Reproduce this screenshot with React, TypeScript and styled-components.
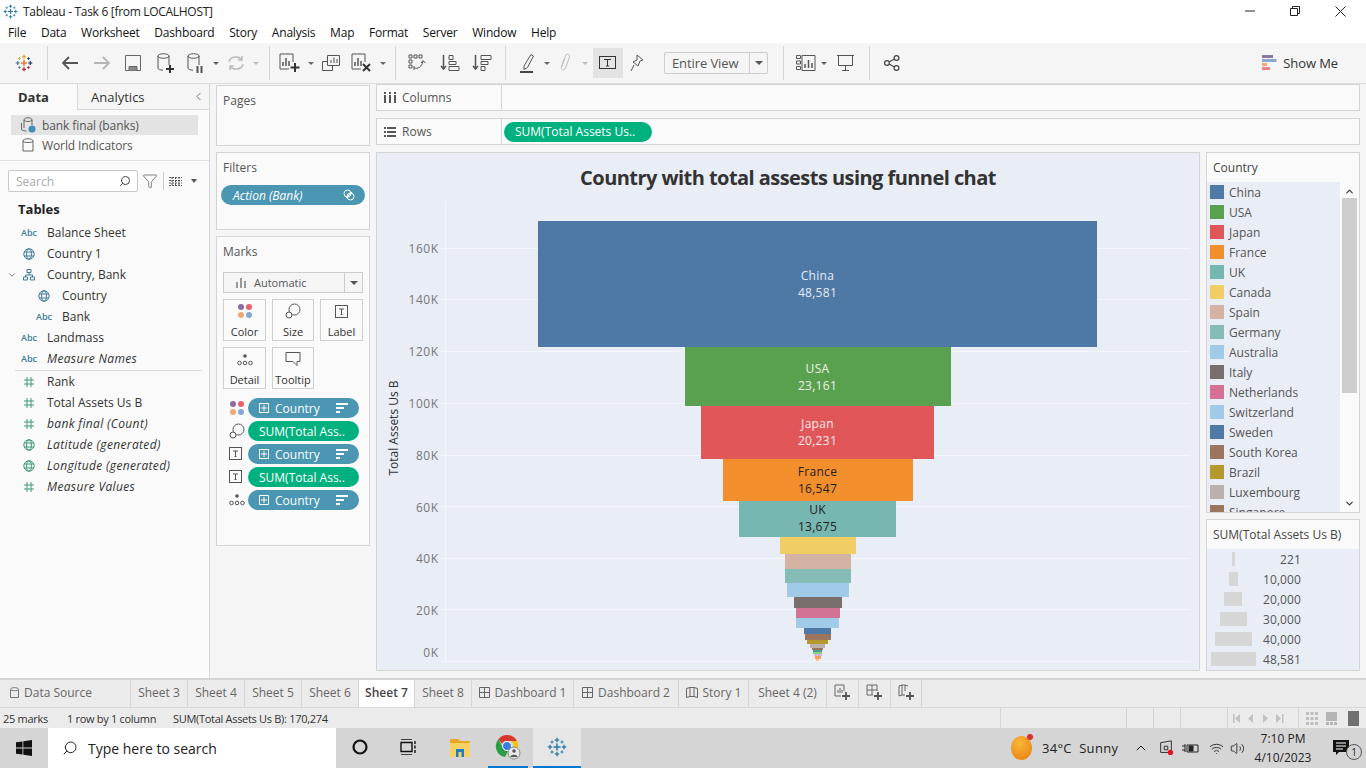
import React from 'react';
import styled, { createGlobalStyle } from 'styled-components';
import { Search, Filter, ChevronLeft, ChevronDown, ChevronUp, Wifi, Volume2 } from 'lucide-react';

const UI_FONT = '"Open Sans", "Noto Sans", "Liberation Sans", sans-serif';

const GlobalStyle = createGlobalStyle`
  html, body { margin: 0; padding: 0; background: #f5f5f5; }
  * { box-sizing: border-box; }
  body { font-family: ${UI_FONT}; font-size: 12px; color: #333; }
`;

const fields = {
  dims: [
    { kind: 'abc', name: 'Balance Sheet' },
    { kind: 'globe', name: 'Country 1' },
    { kind: 'tree', name: 'Country, Bank', caret: true },
    { kind: 'globe', name: 'Country', nested: true },
    { kind: 'abc', name: 'Bank', nested: true },
    { kind: 'abc', name: 'Landmass' },
    { kind: 'abc', name: 'Measure Names', calc: true },
  ],
  measures: [
    { kind: 'hash', name: 'Rank' },
    { kind: 'hash', name: 'Total Assets Us B' },
    { kind: 'hash', name: 'bank final (Count)', calc: true },
    { kind: 'geo', name: 'Latitude (generated)', calc: true },
    { kind: 'geo', name: 'Longitude (generated)', calc: true },
    { kind: 'hash', name: 'Measure Values', calc: true },
  ],
};

const countries = [
  ['China', '#4e79a7'], ['USA', '#59a14f'], ['Japan', '#e15759'], ['France', '#f28e2b'],
  ['UK', '#76b7b2'], ['Canada', '#f1ce63'], ['Spain', '#d4b3a5'], ['Germany', '#86bcb6'],
  ['Australia', '#a0cbe8'], ['Italy', '#79706e'], ['Netherlands', '#d37295'], ['Switzerland', '#a0cbe8'],
  ['Sweden', '#4e79a7'], ['South Korea', '#9c755f'], ['Brazil', '#b6992d'], ['Luxembourg', '#bab0ac'],
  ['Singapore', '#9c755f'],
];

const sizes = [['221', 3], ['10,000', 9], ['20,000', 18], ['30,000', 27], ['40,000', 37], ['48,581', 45]] as const;

// bar coordinates are page pixels, the svg viewBox starts where the card starts
const bars = [
  { x: 538, w: 559, y: 221, h: 126, c: '#4e79a7', label: ['China', '48,581'], ty: 280, t: '#e6ebf4' },
  { x: 685, w: 266, y: 347, h: 59, c: '#59a14f', label: ['USA', '23,161'], ty: 373, t: '#eef4ec' },
  { x: 701, w: 233, y: 406, h: 53, c: '#e15759', label: ['Japan', '20,231'], ty: 428, t: '#fbeaea' },
  { x: 723, w: 190, y: 459, h: 42, c: '#f28e2b', label: ['France', '16,547'], ty: 476, t: '#222' },
  { x: 739, w: 157, y: 501, h: 36, c: '#76b7b2', label: ['UK', '13,675'], ty: 514, t: '#222' },
  { x: 780, w: 76, y: 537, h: 17, c: '#f1ce63' },
  { x: 785, w: 66, y: 554, h: 15, c: '#d4b3a5' },
  { x: 785, w: 66, y: 569, h: 14, c: '#86bcb6' },
  { x: 787, w: 62, y: 583, h: 14, c: '#a0cbe8' },
  { x: 794, w: 48, y: 597, h: 11, c: '#79706e' },
  { x: 796, w: 44, y: 608, h: 10, c: '#d37295' },
  { x: 796, w: 43, y: 618, h: 10, c: '#a0cbe8' },
  { x: 804, w: 27, y: 628, h: 6, c: '#4e79a7' },
  { x: 805, w: 26, y: 634, h: 6, c: '#9c755f' },
  { x: 807, w: 21, y: 640, h: 4, c: '#b6992d' },
  { x: 810, w: 15, y: 644, h: 4, c: '#bab0ac' },
  { x: 812, w: 11, y: 648, h: 2, c: '#9c755f' },
  { x: 813, w: 9, y: 650, h: 2, c: '#499894' },
  { x: 813, w: 9, y: 652, h: 2, c: '#8cd17d' },
  { x: 814, w: 8, y: 654, h: 2, c: '#d7b5d8' },
  { x: 815, w: 6, y: 656, h: 3, c: '#ff9d5c' },
  { x: 816, w: 3, y: 659, h: 2, c: '#ffbe7d' },
];

const ticks = [
  ['160K', 248, 248], ['140K', 299, 299], ['120K', 351, 351], ['100K', 403, 403],
  ['80K', 455, 455], ['60K', 507, 506], ['40K', 558, 558], ['20K', 610, 609], ['0K', 652, 661],
] as const;

function TableauMark({ size = 18, colors }: { size?: number; colors: string[] }) {
  const plus = (cx: number, cy: number, r: number, c: string, w = 1.4) => (
    <g key={`${cx}-${cy}`} stroke={c} strokeWidth={w}>
      <line x1={cx - r} y1={cy} x2={cx + r} y2={cy} />
      <line x1={cx} y1={cy - r} x2={cx} y2={cy + r} />
    </g>
  );
  return (
    <svg width={size} height={size} viewBox="0 0 20 20">
      {plus(10, 10, 3.5, colors[0], 1.6)}
      {plus(10, 3, 2.2, colors[1])}
      {plus(10, 17, 2.2, colors[2])}
      {plus(3, 10, 2.2, colors[3])}
      {plus(17, 10, 2.2, colors[4])}
      {plus(5, 5, 1.6, colors[1], 1)}
      {plus(15, 5, 1.6, colors[4], 1)}
      {plus(5, 15, 1.6, colors[3], 1)}
      {plus(15, 15, 1.6, colors[2], 1)}
    </svg>
  );
}

const BLUE_MARK = ['#2f7fa8', '#2f7fa8', '#2f7fa8', '#2f7fa8', '#2f7fa8'];
const COLOR_MARK = ['#e8762d', '#e8a33d', '#c72035', '#5b879b', '#1f447b'];

function Db({ badge }: { badge?: 'plus' | 'pause' }) {
  return (
    <svg width="20" height="24" viewBox="0 0 20 24" fill="none">
      <path d="M2 5c0-3 11-3 11 0v9M2 5c0 3 11 3 11 0M2 5v12c0 1.500 2 2 5 2.200" stroke="#555" />
      {badge === 'plus' && <path d="M14 14v8M10 18h8" stroke="#333" strokeWidth="2" />}
      {badge === 'pause' && <path d="M11.500 15v7M15.500 15v7" stroke="#555" strokeWidth="2" />}
    </svg>
  );
}

function SheetIcon({ badge }: { badge: 'plus' | 'x' }) {
  return (
    <svg width="24" height="24" viewBox="0 0 24 24" fill="none">
      <path d="M15 3H2v15h9M15 3v8" stroke="#555" />
      <path d="M5 15v-4M8 15V7M11 15v-5" stroke="#555" strokeWidth="1.500" />
      {badge === 'plus' ? <path d="M17 12v9M12.500 16.500h9" stroke="#333" strokeWidth="2" /> : <path d="M13 13l7 7M20 13l-7 7" stroke="#333" strokeWidth="2" />}
    </svg>
  );
}

function FieldIcon({ kind }: { kind: string }) {
  if (kind === 'abc') return <AbcMark>Abc</AbcMark>;
  if (kind === 'hash') {
    return (
      <svg width="12" height="12" viewBox="0 0 12 12" stroke="#3f9a78" fill="none">
        <path d="M4 1v10M8 1v10M1 4h10M1 8h10" />
      </svg>
    );
  }
  if (kind === 'tree') {
    return (
      <svg width="12" height="12" viewBox="0 0 12 12" stroke="#3c7b9c" fill="none">
        <path d="M4 .5h4v3H4zM.5 8h4v3h-4zM7.500 8h4v3h-4zM6 3.500V6M2.500 8V6h7v2" />
      </svg>
    );
  }
  const c = kind === 'geo' ? '#3f9a78' : '#3c7b9c';
  return (
    <svg width="12" height="12" viewBox="0 0 12 12" stroke={c} fill="none">
      <circle cx="6" cy="6" r="5.200" />
      <ellipse cx="6" cy="6" rx="2.400" ry="5.200" />
      <path d="M1 4h10M1 8h10" />
    </svg>
  );
}

const ColorDots = () => (
  <svg width="16" height="16" viewBox="0 0 16 16">
    <circle cx="4" cy="4" r="3" fill="#8a6d9c" />
    <circle cx="12" cy="4" r="3" fill="#e5636b" />
    <circle cx="4" cy="12" r="3" fill="#f0a878" />
    <circle cx="12" cy="12" r="3" fill="#86a6d0" />
  </svg>
);
const SizeRings = () => (
  <svg width="16" height="16" viewBox="0 0 16 16" fill="none" stroke="#555">
    <circle cx="9.500" cy="6.500" r="5.500" />
    <circle cx="4" cy="12" r="3" fill="#fafafa" />
  </svg>
);
const LabelBox = () => (
  <svg width="14" height="14" viewBox="0 0 14 14" fill="none" stroke="#555">
    <rect x=".5" y=".5" width="12" height="12" />
    <path d="M4 4h5M6.500 4v5.500M5.500 9.500h2" />
  </svg>
);
const DetailDots = () => (
  <svg width="16" height="14" viewBox="0 0 16 14" fill="none" stroke="#555">
    <circle cx="8" cy="3" r="1.800" fill="#555" stroke="none" />
    <circle cx="2.500" cy="10" r="1.800" />
    <circle cx="8" cy="10" r="1.800" />
    <circle cx="13.500" cy="10" r="1.800" />
  </svg>
);
const TooltipBubble = () => (
  <svg width="16" height="16" viewBox="0 0 16 16" fill="none" stroke="#555">
    <path d="M1 1.500h14v9h-3v4l-4-4H1z" />
  </svg>
);
const PlusBox = () => (
  <svg width="10" height="10" viewBox="0 0 10 10" fill="none" stroke="#fff">
    <path d="M.5.5h9v9h-9zM5 2v6M2 5h6" />
  </svg>
);
const SortLines = () => (
  <svg width="12" height="10" viewBox="0 0 12 10" fill="#fff">
    <path d="M0 0h12v2H0zM0 4h8v2H0zM0 8h4v2H0z" />
  </svg>
);

export default function App() {
  return (
    <Screen>
      <GlobalStyle />
      <TitleBar>
        <TableauMark size={15} colors={BLUE_MARK} />
        <TitleText>Tableau - Task 6 [from LOCALHOST]</TitleText>
        <WindowButtons>
          <svg width="10" height="10" viewBox="0 0 10 10" stroke="#222"><path d="M0 5h10" /></svg>
          <svg width="10" height="10" viewBox="0 0 10 10" stroke="#222" fill="none"><path d="M.5 2.500h7v7h-7zM2.500 2.500v-2h7v7h-2" /></svg>
          <svg width="11" height="11" viewBox="0 0 11 11" stroke="#222"><path d="M.5.5l10 10M10.500.5l-10 10" /></svg>
        </WindowButtons>
      </TitleBar>
      <MenuBar>
        {['File', 'Data', 'Worksheet', 'Dashboard', 'Story', 'Analysis', 'Map', 'Format', 'Server', 'Window', 'Help'].map(m => (
          <MenuItem key={m}>{m}</MenuItem>
        ))}
      </MenuBar>
      <Toolbar>
        <ToolButton $w={32}><TableauMark size={18} colors={COLOR_MARK} /></ToolButton>
        <ToolSep $l={7} $r={7} />
        <ToolButton $w={30}>
          <svg width="18" height="16" viewBox="0 0 18 16" fill="none" stroke="#555" strokeWidth="1.800"><path d="M17 8H2M8 2L2 8l6 6" /></svg>
        </ToolButton>
        <ToolButton $w={34}>
          <svg width="18" height="16" viewBox="0 0 18 16" fill="none" stroke="#b5b5b5" strokeWidth="1.800"><path d="M1 8h15M10 2l6 6-6 6" /></svg>
        </ToolButton>
        <ToolButton $w={28}>
          <svg width="16" height="16" viewBox="0 0 16 16" fill="none" stroke="#666"><path d="M.5.5h15v15H.5z" /><path d="M4 15.500v-4h8v4" fill="#888" /></svg>
        </ToolButton>
        <ToolButton $w={38}><Db badge="plus" /></ToolButton>
        <ToolButton $w={22}><Db badge="pause" /></ToolButton>
        <ToolCaret $w={18} />
        <ToolButton $w={22}>
          <svg width="18" height="16" viewBox="0 0 18 16" fill="none" stroke="#bbb" strokeWidth="1.500"><path d="M2 7a7 6 0 0 1 13-2M16 9a7 6 0 0 1-13 2M15 1v4h-4M3 15v-4h4" /></svg>
        </ToolButton>
        <ToolCaret $w={18} $muted />
        <ToolSep $l={4} $r={4} />
        <ToolButton $w={32}><SheetIcon badge="plus" /></ToolButton>
        <ToolCaret $w={10} />
        <ToolButton $w={30}>
          <svg width="18" height="18" viewBox="0 0 18 18" fill="none" stroke="#555"><path d="M5.500 1.500h12v10h-12zM.5 7.500h5M.5 7.500v9h10v-5" /><path d="M9 9V6M12 9V3.500M15 9V5" /></svg>
        </ToolButton>
        <ToolButton $w={32}><SheetIcon badge="x" /></ToolButton>
        <ToolCaret $w={10} />
        <ToolSep $l={7} $r={4} />
        <ToolButton $w={34}>
          <svg width="18" height="18" viewBox="0 0 18 18" fill="none" stroke="#555"><path d="M1 1h3v3H1zM6 1h3v3H6zM11 1h3v3h-3zM1 6h3v3H1zM1 11h3v3H1zM6 14c4 1 8-1 9-7M13 9l2-2.500L17.500 9M6 12v4" /></svg>
        </ToolButton>
        <ToolButton $w={32}>
          <svg width="20" height="18" viewBox="0 0 20 18" fill="none" stroke="#555"><path d="M3.500 1v14M1 12l2.500 3L6 12" strokeWidth="1.500" /><path d="M9 1.500h4v4H9zM9 7.500h7v3H9zM9 12.500h10v4H9z" /></svg>
        </ToolButton>
        <ToolButton $w={32}>
          <svg width="20" height="18" viewBox="0 0 20 18" fill="none" stroke="#555"><path d="M3.500 1v14M1 12l2.500 3L6 12" strokeWidth="1.500" /><path d="M9 1.500h10v4H9zM9 7.500h7v3H9zM9 12.500h4v4H9z" /></svg>
        </ToolButton>
        <ToolSep $l={7} $r={8} />
        <ToolButton $w={28}>
          <svg width="16" height="20" viewBox="0 0 16 20" fill="none" stroke="#555"><path d="M4 13L11 1.500l2.500 1.500-6 11.500-3.500 2z" /><path d="M0 19h13" stroke="#444" strokeWidth="2" /></svg>
        </ToolButton>
        <ToolCaret $w={10} />
        <ToolButton $w={28}>
          <svg width="14" height="20" viewBox="0 0 14 20" fill="none" stroke="#bbb"><path d="M5 6l-2.500 8c-.8 3 3 4 4 1l4-11c.8-3-3-4-4-1L3 13" /></svg>
        </ToolButton>
        <ToolCaret $w={10} $muted />
        <ActiveTool>
          <svg width="18" height="18" viewBox="0 0 18 18" fill="none" stroke="#333"><rect x=".5" y="2.500" width="16" height="12" /><path d="M5 5.500h7M8.500 5.500v6.500M7 12h3" /></svg>
        </ActiveTool>
        <ToolButton $w={28}>
          <svg width="14" height="18" viewBox="0 0 14 18" fill="none" stroke="#555"><path d="M7 1l6 5-3 1-2 5-5-4 4-2zM4 11l-3 6" /></svg>
        </ToolButton>
        <FitSelect>
          <FitLabel>Entire View</FitLabel>
          <FitCaret />
        </FitSelect>
        <ToolSep $l={15} $r={8} />
        <ToolButton $w={28}>
          <svg width="20" height="16" viewBox="0 0 20 16" fill="none" stroke="#555"><path d="M.5.5h4v3h-4zM.5 6h4v3h-4zM.5 11.500h4v3h-4zM6 .5h13v15H6z" /><path d="M9 13V9M12.500 13V5M16 13V8" strokeWidth="1.500" /></svg>
        </ToolButton>
        <ToolCaret $w={8} />
        <ToolButton $w={36}>
          <svg width="18" height="18" viewBox="0 0 18 18" fill="none" stroke="#555"><path d="M0 1.500h17M1.500 1.500v10h14v-10M8.500 11.500v5M5 16.500h7" /></svg>
        </ToolButton>
        <ToolSep $l={5} $r={6} />
        <ToolButton $w={32}>
          <svg width="16" height="16" viewBox="0 0 16 16" fill="none" stroke="#444" strokeWidth="1.200"><circle cx="3" cy="8" r="2.400" /><circle cx="12.500" cy="3" r="2.400" /><circle cx="12.500" cy="13" r="2.400" /><path d="M5 7l5.500-3M5 9l5.500 3" /></svg>
        </ToolButton>
        <ShowMe>
          <svg width="15" height="16" viewBox="0 0 15 16">
            <path d="M0 0h11v3H0z" fill="#8a7aa0" />
            <path d="M0 4h14.500v3H0z" fill="#8aa8d0" />
            <path d="M0 8h5v3H0z" fill="#f0a878" />
            <path d="M0 12h8v3H0z" fill="#f08088" />
          </svg>
          Show Me
        </ShowMe>
      </Toolbar>
      <Workspace>
        <DataPane>
          <PaneTabs>
            <PaneTab $active>Data</PaneTab>
            <PaneTab>Analytics</PaneTab>
            <PaneTabFill><ChevronLeft size={13} strokeWidth={1.500} color="#555" /></PaneTabFill>
          </PaneTabs>
          <SourceList>
            <SourceRow $active>
              <svg width="16" height="16" viewBox="0 0 16 16" fill="none" stroke="#666"><path d="M4 3c0-3 8-3 8 0v5M4 3c0 2 8 2 8 0M4 3v8M1.500 6v6c0 1.500 3 2 5 2" /><circle cx="12" cy="12" r="3.500" fill="#3f8fb5" stroke="none" /></svg>
              bank final (banks)
            </SourceRow>
            <SourceRow>
              <svg width="12" height="15" viewBox="0 0 12 15" fill="none" stroke="#666"><path d="M1 3c0-3 10-3 10 0v10H1zM1 3c0 2 10 2 10 0" /></svg>
              World Indicators
            </SourceRow>
          </SourceList>
          <SearchRow>
            <SearchBox>
              <span>Search</span>
              <Search size={12} color="#444" style={{ transform: 'scaleX(-1)' }} />
            </SearchBox>
            <Filter size={16} strokeWidth={1.100} color="#555" />
            <SearchDivider />
            <svg width="13" height="9" viewBox="0 0 13 9" stroke="#555"><path d="M0 .5h13M0 3.500h13M0 6h13M0 8.500h13M3 0v9M6.500 0v9M10 0v9" strokeDasharray="2 1" /></svg>
            <SmallCaret />
          </SearchRow>
          <TablesTitle>Tables</TablesTitle>
          <FieldList>
            {fields.dims.map(f => (
              <FieldRow key={f.name} $nested={f.nested}>
                {f.caret && <TreeCaret><ChevronDown size={10} color="#666" /></TreeCaret>}
                <FieldIconSlot><FieldIcon kind={f.kind} /></FieldIconSlot>
                <FieldName $calc={f.calc}>{f.name}</FieldName>
              </FieldRow>
            ))}
            <FieldDivider />
            {fields.measures.map(f => (
              <FieldRow key={f.name}>
                <FieldIconSlot><FieldIcon kind={f.kind} /></FieldIconSlot>
                <FieldName $calc={f.calc}>{f.name}</FieldName>
              </FieldRow>
            ))}
          </FieldList>
        </DataPane>

        <CardsColumn>
          <Card $h={61}><CardTitle>Pages</CardTitle></Card>
          <Card $h={78}>
            <CardTitle>Filters</CardTitle>
            <FilterPill>
              <span>Action (Bank)</span>
              <svg width="12" height="12" viewBox="0 0 12 12" fill="none" stroke="#fff"><circle cx="4.500" cy="4.500" r="3.500" /><circle cx="7.500" cy="7.500" r="3.500" /><path d="M3 9l6-6" /></svg>
            </FilterPill>
          </Card>
          <Card $h={310}>
            <CardTitle>Marks</CardTitle>
            <MarkType>
              <MarkTypeLabel>
                <svg width="10" height="10" viewBox="0 0 10 10" fill="#999"><path d="M0 4h2v6H0zM4 0h2v10H4zM8 3h2v7H8z" /></svg>
                Automatic
              </MarkTypeLabel>
              <FitCaret />
            </MarkType>
            <MarkGrid>
              <MarkButton><ColorDots />Color</MarkButton>
              <MarkButton><SizeRings />Size</MarkButton>
              <MarkButton><LabelBox />Label</MarkButton>
              <MarkButton><DetailDots />Detail</MarkButton>
              <MarkButton><TooltipBubble />Tooltip</MarkButton>
            </MarkGrid>
            <MarkPills>
              <MarkPillRow><ColorDots /><FieldPill $blue><PlusBox /><PillText>Country</PillText><SortLines /></FieldPill></MarkPillRow>
              <MarkPillRow><SizeRings /><FieldPill><PillText>SUM(Total Ass..</PillText></FieldPill></MarkPillRow>
              <MarkPillRow><LabelBox /><FieldPill $blue><PlusBox /><PillText>Country</PillText><SortLines /></FieldPill></MarkPillRow>
              <MarkPillRow><LabelBox /><FieldPill><PillText>SUM(Total Ass..</PillText></FieldPill></MarkPillRow>
              <MarkPillRow><DetailDots /><FieldPill $blue><PlusBox /><PillText>Country</PillText><SortLines /></FieldPill></MarkPillRow>
            </MarkPills>
          </Card>
        </CardsColumn>

        <MainColumn>
          <Shelf>
            <ShelfLabel>
              <svg width="12" height="11" viewBox="0 0 12 11" fill="#555"><path d="M0 3h2v8H0zM0 0h2v2H0zM5 3h2v8H5zM5 0h2v2H5zM10 3h2v8h-2zM10 0h2v2h-2z" /></svg>
              Columns
            </ShelfLabel>
          </Shelf>
          <Shelf>
            <ShelfLabel>
              <svg width="12" height="10" viewBox="0 0 12 10" fill="#555"><path d="M3 0h9v2H3zM3 4h9v2H3zM3 8h9v2H3zM0 0h2v2H0zM0 4h2v2H0zM0 8h2v2H0z" /></svg>
              Rows
            </ShelfLabel>
            <ShelfPill>SUM(Total Assets Us..</ShelfPill>
          </Shelf>
          <VizRow>
            <VizCard>
              <VizTitle>Country with total assests using funnel chat</VizTitle>
              <svg width="822" height="469" viewBox="377 201 822 469">
                <line x1="445.5" x2="445.5" y1="201" y2="661" stroke="#f4f6fb" />
                {ticks.map(([label, ly, gy]) => (
                  <g key={label}>
                    <line x1="441" x2="1190" y1={gy + 0.5} y2={gy + 0.5} stroke="#f4f6fb" />
                    <text x="438.5" y={ly + 5} textAnchor="end" fontSize="12" letterSpacing="0.5" fill="#777" fontFamily={UI_FONT}>{label}</text>
                  </g>
                ))}
                <text transform="translate(398 428) rotate(-90)" textAnchor="middle" fontSize="12" fontWeight="500" fill="#333" fontFamily={UI_FONT}>Total Assets Us B</text>
                {bars.map(b => (
                  <rect key={`${b.y}`} x={b.x} y={b.y} width={b.w} height={b.h} fill={b.c} />
                ))}
                {bars.filter(b => b.label).map(b => (
                  <g key={`t${b.y}`} textAnchor="middle" fontSize="12" letterSpacing="0.3" fill={b.t} fontFamily={UI_FONT}>
                    <text x="817.5" y={b.ty}>{b.label![0]}</text>
                    <text x="817.5" y={(b.ty as number) + 17}>{b.label![1]}</text>
                  </g>
                ))}
              </svg>
            </VizCard>
            <LegendColumn>
              <LegendCard $h={361}>
                <LegendTitle>Country</LegendTitle>
                <LegendBody>
                  <LegendList>
                    {countries.map(([name, color]) => (
                      <LegendRow key={name}>
                        <Swatch style={{ background: color }} />
                        {name}
                      </LegendRow>
                    ))}
                  </LegendList>
                  <ScrollTrack>
                    <ChevronUp size={11} color="#333" strokeWidth={2.500} />
                    <ScrollThumb />
                    <ChevronDown size={11} color="#333" strokeWidth={2.500} />
                  </ScrollTrack>
                </LegendBody>
              </LegendCard>
              <LegendCard $h={152}>
                <LegendTitle>SUM(Total Assets Us B)</LegendTitle>
                <SizeList>
                  {sizes.map(([label, w]) => (
                    <SizeRow key={label}>
                      <SizeSlot><SizeBar style={{ width: w }} /></SizeSlot>
                      <SizeValue>{label}</SizeValue>
                    </SizeRow>
                  ))}
                </SizeList>
              </LegendCard>
            </LegendColumn>
          </VizRow>
        </MainColumn>
      </Workspace>

      <TabStrip>
        <SheetTab $w={131} $start>
          <svg width="9" height="12" viewBox="0 0 9 12" fill="none" stroke="#777"><path d="M.5 2.500c0-2.500 8-2.500 8 0v8h-8zM.5 2.500c0 1.500 8 1.500 8 0" /></svg>
          Data Source
        </SheetTab>
        <SheetTab $w={57}>Sheet 3</SheetTab>
        <SheetTab $w={57}>Sheet 4</SheetTab>
        <SheetTab $w={57}>Sheet 5</SheetTab>
        <SheetTab $w={57}>Sheet 6</SheetTab>
        <SheetTab $w={56} $active>Sheet 7</SheetTab>
        <SheetTab $w={57}>Sheet 8</SheetTab>
        <SheetTab $w={102}><GridGlyph />Dashboard 1</SheetTab>
        <SheetTab $w={105}><GridGlyph />Dashboard 2</SheetTab>
        <SheetTab $w={70}><BookGlyph />Story 1</SheetTab>
        <SheetTab $w={78}>Sheet 4 (2)</SheetTab>
        <SheetTab $w={32}><NewTabGlyph kind="sheet" /></SheetTab>
        <SheetTab $w={32}><NewTabGlyph kind="dash" /></SheetTab>
        <SheetTab $w={31}><NewTabGlyph kind="story" /></SheetTab>
      </TabStrip>

      <StatusBar>
        <StatusText $w={64}>25 marks</StatusText>
        <StatusText $w={106}>1 row by 1 column</StatusText>
        <StatusText $w={827}>SUM(Total Assets Us B): 170,274</StatusText>
        <StatusCell $w={126} />
        <StatusCell $w={27} />
        <StatusCell $w={27} />
        <StatusCell $w={47} />
        <StatusNav $w={71}>
          <svg width="60" height="9" viewBox="0 0 60 9" fill="#c2c2c2">
            <path d="M0 0h1.500v9H0zM7 0v9L2 4.500zM20 0v9l-5-4.500zM30 0v9l5-4.500zM43 0v9l5-4.500zM49 0h1.500v9H49z" />
          </svg>
        </StatusNav>
        <StatusNav $w={68}>
          <svg width="54" height="15" viewBox="0 0 54 15">
            <path d="M0 1h3v3H0zM4.500 1h3v3h-3zM9 1h3v3H9zM0 6h3v3H0zM4.500 6h3v3h-3zM9 6h3v3H9zM0 11h3v3H0zM4.500 11h3v3h-3zM9 11h3v3H9z" fill="#bdbdbd" />
            <path d="M20 1h11v9H20zM20 11h3v3h-3zM24 11h3v3h-3zM28 11h3v3h-3z" fill="#b5b5b5" />
            <path d="M42 0h11v15H42z" fill="#707070" />
          </svg>
        </StatusNav>
      </StatusBar>

      <Taskbar>
        <StartSlot>
          <svg width="16" height="16" viewBox="0 0 16 16" fill="#111"><path d="M0 2.300l6.500-.9v6.200H0zM7.300 1.300L16 0v7.600H7.300zM0 8.400h6.500v6.200L0 13.700zM7.300 8.400H16V16l-8.700-1.200z" /></svg>
        </StartSlot>
        <TaskSearch>
          <Search size={16} color="#222" strokeWidth={1.500} style={{ transform: 'scaleX(-1)' }} />
          Type here to search
        </TaskSearch>
        <TaskSlot $w={48}>
          <svg width="18" height="18" viewBox="0 0 18 18" fill="none" stroke="#111" strokeWidth="2.200"><circle cx="9" cy="9" r="6.500" /></svg>
        </TaskSlot>
        <TaskSlot $w={48}>
          <svg width="18" height="16" viewBox="0 0 18 16" fill="none" stroke="#111" strokeWidth="1.400"><path d="M2 0h11M2 16h11M2 3.500h11v9H2zM16 2v3M16 6.500v3M16 11v3" /></svg>
        </TaskSlot>
        <TaskSlot $w={56}>
          <svg width="22" height="20" viewBox="0 0 22 20"><path d="M1 2h8l2 2h10v3H1z" fill="#e8a91e" /><path d="M1 6h20v14H1z" fill="#fad165" /><path d="M7 12h8v8H7z" fill="#1f7fc4" /><path d="M9.500 15h3v5h-3z" fill="#fad165" /></svg>
        </TaskSlot>
        <TaskSlot $w={40} $open>
          <svg width="26" height="26" viewBox="0 0 26 26">
            <path d="M12 1a11 11 0 0 1 10 6H12a5 5 0 0 0-5 3L3.500 5A11 11 0 0 1 12 1z" fill="#d9372c" />
            <path d="M22 7a11 11 0 0 1-9 16l4-8a5 5 0 0 0-1-8z" fill="#f4c20d" />
            <path d="M3.500 5L8 14a5 5 0 0 0 5 3l-3 6A11 11 0 0 1 3.500 5z" fill="#2d9c46" />
            <circle cx="12" cy="12" r="4.500" fill="#3a7de0" stroke="#fff" />
            <circle cx="19" cy="19" r="6" fill="#e8e8e8" stroke="#888" />
            <circle cx="19" cy="17" r="1.800" fill="#555" />
            <path d="M15.500 23c0-3 7-3 7 0z" fill="#555" />
          </svg>
        </TaskSlot>
        <TaskSlot $w={48} $open $active>
          <TableauMark size={20} colors={BLUE_MARK} />
        </TaskSlot>
        <TraySpacer />
        <WeatherIcon />
        <WeatherText>34°C&nbsp;&nbsp;Sunny</WeatherText>
        <TrayIcon $w={34}><ChevronUp size={16} color="#111" strokeWidth={1.500} /></TrayIcon>
        <TrayIcon $w={16}>
          <svg width="18" height="18" viewBox="0 0 18 18" fill="none" stroke="#222"><path d="M3 3l12-2v13H3z" /><path d="M7 7h4v4H7z" /><circle cx="14" cy="14" r="3" fill="#e81123" stroke="none" /></svg>
        </TrayIcon>
        <TrayIcon $w={32}>
          <svg width="18" height="14" viewBox="0 0 18 14" fill="none" stroke="#222"><path d="M6 4h11v7H6zM1 5h3M1 9h3M4 3v8" /><path d="M8 5h4v5H8z" fill="#222" /></svg>
        </TrayIcon>
        <TrayIcon $w={20}><Wifi size={15} color="#222" strokeWidth={1.400} /></TrayIcon>
        <TrayIcon $w={22}><Volume2 size={15} color="#222" strokeWidth={1.400} /></TrayIcon>
        <Clock>
          <span>7:10 PM</span>
          <span>4/10/2023</span>
        </Clock>
        <NotifySlot>
          <svg width="18" height="18" viewBox="0 0 18 18"><path d="M1 1h16v12H7l-3 3v-3H1z" fill="#111" /><path d="M4 4h10M4 7h10M4 10h7" stroke="#fff" /></svg>
          <NotifyBadge>1</NotifyBadge>
        </NotifySlot>
      </Taskbar>
    </Screen>
  );
}

const GridGlyph = () => (
  <svg width="11" height="11" viewBox="0 0 11 11" fill="none" stroke="#666"><path d="M.5.5h10v10H.5zM5.500.5v10M.5 5.500h10" /></svg>
);
const BookGlyph = () => (
  <svg width="12" height="12" viewBox="0 0 12 12" fill="none" stroke="#666"><path d="M.5 1.500L4 .5v9l-3.500 1zM11.500 1.500L8 .5v9l3.500 1zM4 .5h4M4 9.500h4" /></svg>
);
const NewTabGlyph = ({ kind }: { kind: 'sheet' | 'dash' | 'story' }) => (
  <svg width="17" height="17" viewBox="0 0 17 17" fill="none" stroke="#666">
    {kind === 'sheet' && <path d="M10 1H1v11h6M10 1v6M4 9V6M6 9V4M8 9V6" />}
    {kind === 'dash' && <path d="M1 1h10v6M1 1v10h6M6 1v10M1 6h10" />}
    {kind === 'story' && <path d="M1 2l3-1v10l-3 1zM10 2L7 1v6M4 1h3M4 11h3" />}
    <path d="M12 8v8M8 12h8" stroke="#555" strokeWidth="1.800" />
  </svg>
);

const Screen = styled.div`
  width: 1366px;
  height: 768px;
  display: flex;
  flex-direction: column;
  overflow: hidden;
  background: #f5f5f5;
`;

const TitleBar = styled.div`
  height: 22px;
  flex: none;
  display: flex;
  align-items: center;
  gap: 5px;
  padding-left: 3px;
  background: #fff;
`;

const TitleText = styled.span`
  font-size: 12px;
  letter-spacing: -0.3px;
  color: #222;
`;

const WindowButtons = styled.div`
  margin-left: auto;
  width: 138px;
  display: flex;
  align-items: center;
  justify-content: space-between;
  padding: 0 20px 0 17px;
`;

const MenuBar = styled.div`
  height: 21px;
  flex: none;
  display: flex;
  align-items: center;
  gap: 14.7px;
  padding-left: 8px;
  background: #fff;
`;

const MenuItem = styled.span`
  font-size: 12px;
  letter-spacing: -0.2px;
  color: #111;
`;

const Toolbar = styled.div`
  height: 41px;
  flex: none;
  display: flex;
  align-items: center;
  padding-left: 8px;
  background: #f5f5f5;
  border-bottom: 1px solid #dcdcdc;
`;

const ToolButton = styled.div<{ $w: number }>`
  width: ${p => p.$w}px;
  height: 30px;
  flex: none;
  display: flex;
  align-items: center;
  justify-content: center;
`;

const ToolCaret = styled.div<{ $w: number; $muted?: boolean }>`
  width: ${p => p.$w}px;
  flex: none;
  display: flex;
  justify-content: center;
  &::after {
    content: '';
    border-left: 3px solid transparent;
    border-right: 3px solid transparent;
    border-top: 3px solid ${p => (p.$muted ? '#bbb' : '#666')};
  }
`;

const ToolSep = styled.div<{ $l: number; $r: number }>`
  width: 1px;
  height: 34px;
  flex: none;
  margin: 0 ${p => p.$r}px 0 ${p => p.$l}px;
  background: #d4d4d4;
`;

const ActiveTool = styled.div`
  width: 30px;
  height: 30px;
  flex: none;
  margin-left: 3px;
  display: flex;
  align-items: center;
  justify-content: center;
  background: #e3e3e3;
`;

const FitSelect = styled.div`
  width: 104px;
  height: 22px;
  flex: none;
  margin-left: 13px;
  display: flex;
  align-items: center;
  border: 1px solid #ccc;
  border-radius: 2px;
  background: #f5f5f5;
`;

const FitLabel = styled.span`
  flex: 1;
  padding-left: 7px;
  font-size: 13px;
  letter-spacing: -0.1px;
  color: #555;
`;

const FitCaret = styled.div`
  width: 18px;
  height: 100%;
  flex: none;
  display: flex;
  align-items: center;
  justify-content: center;
  border-left: 1px solid #ccc;
  &::after {
    content: '';
    border-left: 4px solid transparent;
    border-right: 4px solid transparent;
    border-top: 4px solid #555;
  }
`;

const ShowMe = styled.div`
  margin-left: auto;
  padding-right: 28px;
  display: flex;
  align-items: center;
  gap: 6px;
  font-size: 13px;
  letter-spacing: -0.1px;
  color: #333;
`;

const Workspace = styled.div`
  flex: 1;
  min-height: 0;
  display: flex;
`;

const DataPane = styled.div`
  width: 210px;
  flex: none;
  display: flex;
  flex-direction: column;
  background: #fafafa;
  border-right: 1px solid #d8d8d8;
`;

const PaneTabs = styled.div`
  height: 26px;
  flex: none;
  display: flex;
`;

const PaneTab = styled.div<{ $active?: boolean }>`
  width: 77px;
  display: flex;
  align-items: center;
  padding-left: ${p => (p.$active ? 18 : 13)}px;
  font-size: 13px;
  font-weight: ${p => (p.$active ? 700 : 400)};
  color: #333;
  background: ${p => (p.$active ? '#fafafa' : '#f5f5f5')};
  border-left: ${p => (p.$active ? 'none' : '1px solid #d8d8d8')};
  border-bottom: ${p => (p.$active ? 'none' : '1px solid #d8d8d8')};
`;

const PaneTabFill = styled.div`
  flex: 1;
  display: flex;
  align-items: center;
  justify-content: flex-end;
  padding-right: 4px;
  background: #f5f5f5;
  border-bottom: 1px solid #d8d8d8;
`;

const SourceList = styled.div`
  flex: none;
  padding: 5px 11px 5px;
  border-bottom: 1px solid #e2e2e2;
`;

const SourceRow = styled.div<{ $active?: boolean }>`
  width: 187px;
  height: 20px;
  display: flex;
  align-items: center;
  gap: ${p => (p.$active ? 6 : 8)}px;
  padding-left: ${p => (p.$active ? 9 : 11)}px;
  font-size: 12px;
  letter-spacing: -0.1px;
  color: #555;
  background: ${p => (p.$active ? '#e3e3e3' : 'transparent')};
`;

const SearchRow = styled.div`
  height: 22px;
  flex: none;
  margin-top: 9px;
  padding-left: 8px;
  display: flex;
  align-items: center;
  gap: 4px;
`;

const SearchBox = styled.div`
  width: 130px;
  height: 22px;
  display: flex;
  align-items: center;
  justify-content: space-between;
  padding: 0 6px 0 7px;
  border: 1px solid #c8c8c8;
  border-radius: 2px;
  background: #fff;
  font-size: 12px;
  color: #aaa;
`;

const SearchDivider = styled.div`
  width: 1px;
  height: 18px;
  margin: 0 1px;
  background: #ccc;
`;

const SmallCaret = styled.div`
  margin-left: 5px;
  border-left: 3px solid transparent;
  border-right: 3px solid transparent;
  border-top: 4px solid #555;
`;

const TablesTitle = styled.div`
  height: 24px;
  margin-top: 6px;
  padding: 0 0 2px 18px;
  display: flex;
  align-items: center;
  font-size: 13px;
  font-weight: 700;
  color: #222;
`;

const FieldList = styled.div`
  display: flex;
  flex-direction: column;
`;

const FieldRow = styled.div<{ $nested?: boolean }>`
  height: 21px;
  position: relative;
  display: flex;
  align-items: center;
  padding-left: ${p => (p.$nested ? 33 : 18)}px;
`;

const TreeCaret = styled.span`
  position: absolute;
  left: 7px;
  top: 6px;
  display: flex;
`;

const FieldIconSlot = styled.span`
  width: 22px;
  margin-right: 7px;
  flex: none;
  display: flex;
  justify-content: center;
`;

const AbcMark = styled.span`
  font-size: 9px;
  font-weight: 600;
  color: #3c7b9c;
`;

const FieldName = styled.span<{ $calc?: boolean }>`
  font-size: 12px;
  font-style: ${p => (p.$calc ? 'italic' : 'normal')};
  letter-spacing: ${p => (p.$calc ? '0.35px' : '0')};
  color: #333;
`;

const FieldDivider = styled.div`
  height: 1px;
  margin: 1px 7px 0 15px;
  background: #dcdcdc;
`;

const CardsColumn = styled.div`
  width: 154px;
  flex: none;
  margin: 1px 0 0 6px;
  display: flex;
  flex-direction: column;
  gap: 6px;
`;

const Card = styled.div<{ $h: number }>`
  height: ${p => p.$h}px;
  padding: 0 6px;
  background: #fafafa;
  border: 1px solid #d4d4d4;
`;

const CardTitle = styled.div`
  height: 28px;
  display: flex;
  align-items: center;
  font-size: 12px;
  color: #555;
`;

const FilterPill = styled.div`
  height: 20px;
  margin: 4px -2px 0 -2px;
  padding: 0 10px 0 12px;
  display: flex;
  align-items: center;
  justify-content: space-between;
  border-radius: 10px;
  background: #4b96b3;
  color: #fff;
  font-size: 12px;
  font-style: italic;
`;

const MarkType = styled.div`
  height: 21px;
  margin-top: 7px;
  display: flex;
  align-items: center;
  border: 1px solid #ccc;
  background: #f5f5f5;
`;

const MarkTypeLabel = styled.div`
  flex: 1;
  padding-left: 12px;
  display: flex;
  align-items: center;
  gap: 8px;
  font-size: 11px;
  color: #555;
`;

const MarkGrid = styled.div`
  margin-top: 6px;
  display: grid;
  grid-template-columns: 43px 42px 43px;
  grid-auto-rows: 42px;
  column-gap: 6px;
  row-gap: 6px;
`;

const MarkButton = styled.div`
  display: flex;
  flex-direction: column;
  align-items: center;
  justify-content: flex-end;
  gap: 5px;
  padding-bottom: 1px;
  border: 1px solid #d0d0d0;
  font-size: 11px;
  color: #333;
`;

const MarkPills = styled.div`
  margin-top: 9px;
  padding: 0 4px 0 6px;
  display: flex;
  flex-direction: column;
  gap: 3px;
`;

const MarkPillRow = styled.div`
  height: 20px;
  display: flex;
  align-items: center;
  justify-content: space-between;
  & > svg {
    flex: none;
  }
`;

const FieldPill = styled.div<{ $blue?: boolean }>`
  width: 111px;
  height: 20px;
  flex: none;
  padding: 0 11px;
  display: flex;
  align-items: center;
  gap: 6px;
  border-radius: 10px;
  background: ${p => (p.$blue ? '#4b96b3' : '#00b180')};
  color: #fff;
  font-size: 12px;
`;

const PillText = styled.span`
  flex: 1;
  white-space: nowrap;
`;

const MainColumn = styled.div`
  flex: 1;
  min-width: 0;
  margin-left: 6px;
  padding-right: 6px;
  display: flex;
  flex-direction: column;
  gap: 7px;
`;

const Shelf = styled.div`
  height: 27px;
  flex: none;
  display: flex;
  align-items: center;
  background: #fafafa;
  border: 1px solid #d4d4d4;
`;

const ShelfLabel = styled.div`
  width: 125px;
  height: 100%;
  flex: none;
  display: flex;
  align-items: center;
  gap: 6px;
  padding-left: 7px;
  border-right: 1px solid #d4d4d4;
  font-size: 12px;
  color: #555;
`;

const ShelfPill = styled.div`
  width: 148px;
  height: 20px;
  margin-left: 2px;
  padding-left: 11px;
  display: flex;
  align-items: center;
  border-radius: 10px;
  background: #00b180;
  color: #fff;
  font-size: 12px;
`;

const VizRow = styled.div`
  height: 519px;
  flex: none;
  display: flex;
  gap: 6px;
`;

const VizCard = styled.div`
  width: 824px;
  flex: none;
  display: flex;
  flex-direction: column;
  background: #e9edf6;
  border: 1px solid #d4d4d4;
  overflow: hidden;
`;

const VizTitle = styled.div`
  height: 48px;
  flex: none;
  padding-top: 11px;
  text-align: center;
  font-size: 20px;
  font-weight: 700;
  letter-spacing: -0.55px;
  color: #333;
  white-space: nowrap;
`;

const LegendColumn = styled.div`
  flex: 1;
  display: flex;
  flex-direction: column;
  gap: 6px;
`;

const LegendCard = styled.div<{ $h: number }>`
  height: ${p => p.$h}px;
  display: flex;
  flex-direction: column;
  background: #fafafa;
  border: 1px solid #d4d4d4;
  overflow: hidden;
`;

const LegendTitle = styled.div`
  height: 29px;
  flex: none;
  display: flex;
  align-items: center;
  padding-left: 6px;
  font-size: 12px;
  color: #444;
`;

const LegendBody = styled.div`
  flex: 1;
  min-height: 0;
  display: flex;
`;

const LegendList = styled.div`
  width: 133px;
  flex: none;
  overflow: hidden;
  background: #e9edf6;
`;

const LegendRow = styled.div`
  height: 20px;
  display: flex;
  align-items: center;
  gap: 5px;
  padding-left: 3px;
  font-size: 12px;
  color: #555;
`;

const Swatch = styled.span`
  width: 14px;
  height: 14px;
  flex: none;
`;

const ScrollTrack = styled.div`
  width: 16px;
  margin-left: 1px;
  display: flex;
  flex-direction: column;
  align-items: center;
  padding: 4px 0 3px;
  justify-content: space-between;
`;

const ScrollThumb = styled.div`
  width: 15px;
  height: 195px;
  margin-top: 1px;
  margin-bottom: auto;
  background: #cdcdcd;
`;

const SizeList = styled.div`
  flex: 1;
  background: #e9edf6;
`;

const SizeRow = styled.div`
  height: 20px;
  display: flex;
  align-items: center;
`;

const SizeSlot = styled.span`
  width: 52px;
  flex: none;
  display: flex;
  justify-content: center;
`;

const SizeBar = styled.span`
  height: 14px;
  background: #d6d6d6;
`;

const SizeValue = styled.span`
  width: 42px;
  text-align: right;
  font-size: 12px;
  letter-spacing: 0.1px;
  color: #555;
`;

const TabStrip = styled.div`
  height: 30px;
  flex: none;
  display: flex;
  background: #ebebeb;
  border-top: 2px solid #d4d4d4;
  border-bottom: 1px solid #d8d8d8;
`;

const SheetTab = styled.div<{ $w: number; $active?: boolean; $start?: boolean }>`
  width: ${p => p.$w}px;
  flex: none;
  display: flex;
  align-items: center;
  justify-content: ${p => (p.$start ? 'flex-start' : 'center')};
  gap: 5px;
  padding: 0 0 2px ${p => (p.$start ? 10 : 0)}px;
  border-right: 1px solid #d4d4d4;
  font-size: 12px;
  font-weight: ${p => (p.$active ? 600 : 400)};
  color: ${p => (p.$active ? '#444' : '#666')};
  background: ${p => (p.$active ? '#fff' : 'transparent')};
`;

const StatusBar = styled.div`
  height: 20px;
  flex: none;
  display: flex;
  align-items: center;
  padding-left: 3px;
  background: #ebebeb;
`;

const StatusText = styled.span<{ $w: number }>`
  width: ${p => p.$w}px;
  flex: none;
  font-size: 11px;
  letter-spacing: -0.3px;
  color: #333;
  white-space: nowrap;
`;

const StatusCell = styled.div<{ $w: number }>`
  width: ${p => p.$w}px;
  height: 100%;
  flex: none;
  border-left: 1px solid #d4d4d4;
`;

const StatusNav = styled(StatusCell)`
  display: flex;
  align-items: center;
  justify-content: center;
`;

const Taskbar = styled.div`
  height: 40px;
  flex: none;
  display: flex;
  align-items: center;
  background: #d5d5d5;
`;

const StartSlot = styled.div`
  width: 48px;
  height: 100%;
  flex: none;
  display: flex;
  align-items: center;
  justify-content: center;
`;

const TaskSearch = styled.div`
  width: 288px;
  height: 100%;
  flex: none;
  display: flex;
  align-items: center;
  gap: 10px;
  padding-left: 14px;
  background: #fff;
  font-size: 14px;
  color: #222;
`;

const TaskSlot = styled.div<{ $w: number; $open?: boolean; $active?: boolean }>`
  width: ${p => p.$w}px;
  height: 100%;
  flex: none;
  margin-left: ${p => (p.$active ? 5 : 0)}px;
  display: flex;
  align-items: center;
  justify-content: center;
  background: ${p => (p.$active ? '#e6e6e6' : 'transparent')};
  border-bottom: 2px solid ${p => (p.$open ? '#0078d4' : 'transparent')};
`;

const TraySpacer = styled.div`
  flex: 1;
`;

const WeatherIcon = styled.div`
  width: 21px;
  height: 24px;
  margin-right: 10px;
  flex: none;
  position: relative;
  border-radius: 50%;
  background: radial-gradient(circle at 40% 30%, #f7b733, #ec7a12);
  &::after {
    content: '';
    position: absolute;
    top: -2px;
    right: -1px;
    width: 6px;
    height: 6px;
    border-radius: 50%;
    background: #d9302a;
  }
`;

const WeatherText = styled.span`
  width: 82px;
  flex: none;
  font-size: 13px;
  letter-spacing: 0.3px;
  color: #222;
  white-space: nowrap;
`;

const TrayIcon = styled.div<{ $w: number }>`
  width: ${p => p.$w}px;
  flex: none;
  display: flex;
  justify-content: center;
`;

const Clock = styled.div`
  width: 66px;
  margin-left: 2px;
  flex: none;
  display: flex;
  flex-direction: column;
  align-items: center;
  gap: 4px;
  font-size: 12px;
  line-height: 15px;
  color: #222;
`;

const NotifySlot = styled.div`
  width: 50px;
  flex: none;
  position: relative;
  display: flex;
  justify-content: center;
`;

const NotifyBadge = styled.span`
  position: absolute;
  left: 30px;
  top: 5px;
  width: 16px;
  height: 16px;
  display: flex;
  align-items: center;
  justify-content: center;
  border: 1px solid #555;
  border-radius: 50%;
  font-size: 10px;
  background: #d5d5d5;
  color: #222;
`;
